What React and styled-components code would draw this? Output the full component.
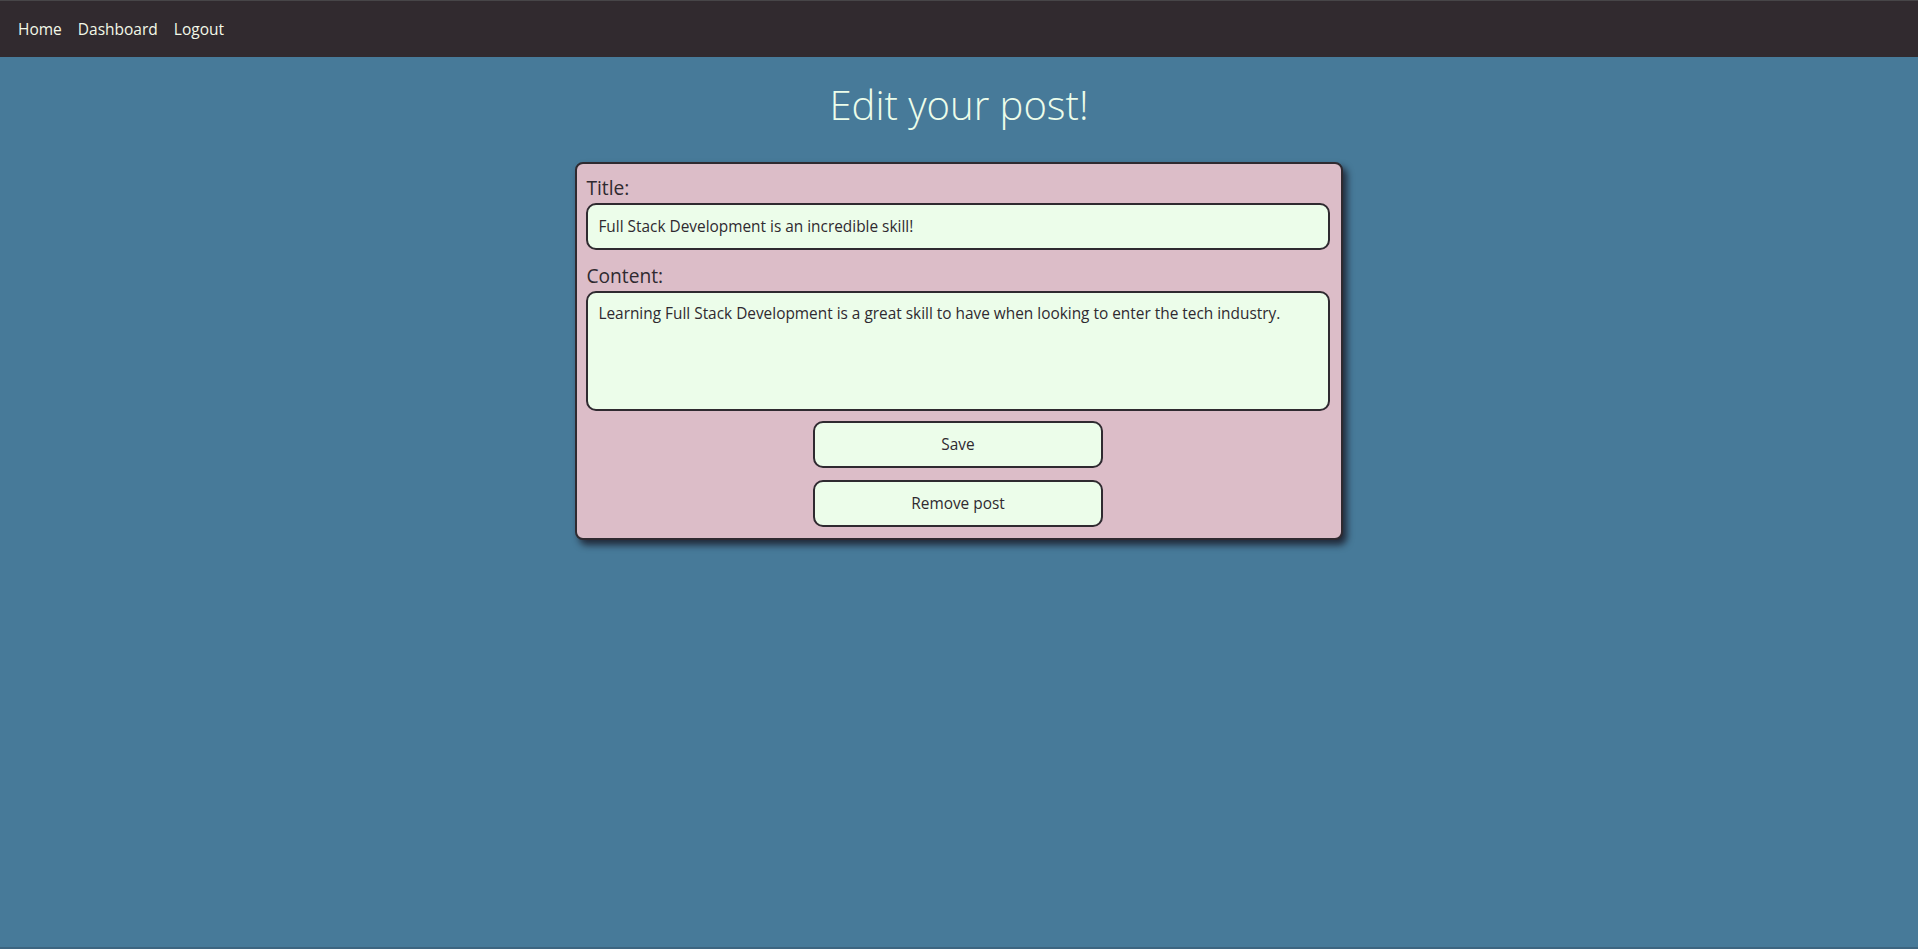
import React, { useState } from 'react';
import styled, { createGlobalStyle } from 'styled-components';

const GlobalStyle = createGlobalStyle`
    * {
        box-sizing: border-box;
    }
    html, body {
        margin: 0;
        padding: 0;
    }
    body {
        font-family: "Open Sans", "Liberation Sans", sans-serif;
        background: #477a99;
        color: #2f2a30;
    }
`;

const Page = styled.div`
    min-height: 100vh;
    display: flex;
    flex-direction: column;
    border-top: 1px solid #474548;
`;

const NavBar = styled.nav`
    height: 56px;
    background: #312a2f;
    display: flex;
    align-items: center;
    padding: 0 18px;
    gap: 16px;
`;

const NavLink = styled.a`
    color: #f3f8e8;
    font-size: 15.5px;
    text-decoration: none;
    cursor: pointer;
`;

const Main = styled.main`
    flex: 1;
    display: flex;
    flex-direction: column;
    align-items: center;
`;

const Heading = styled.h1`
    margin: 20px 0 30px;
    font-size: 40px;
    font-weight: 300;
    color: #ecfdea;
`;

const Card = styled.form`
    width: 40%;
    background: #dcbdc8;
    border: 2px solid #2f2a30;
    border-radius: 8px;
    padding: 10px 11px 11px 9px;
    box-shadow: 4px 5px 7px rgba(20, 15, 25, 0.75);
    display: flex;
    flex-direction: column;
`;

const Label = styled.label`
    font-size: 19.2px;
    line-height: 27px;
    margin-bottom: 2px;
`;

const Field = styled.input`
    width: 100%;
    height: 47px;
    padding: 10px;
    margin-bottom: 12px;
    font-family: inherit;
    font-size: 15.4px;
    color: #2f2a30;
    background: #ecfdea;
    border: 2px solid #2f2a30;
    border-radius: 10px;
    outline: none;
`;

const Area = styled.textarea`
    width: 100%;
    height: 120px;
    padding: 10px;
    margin-bottom: 10px;
    font-family: inherit;
    font-size: 15.4px;
    color: #2f2a30;
    background: #ecfdea;
    border: 2px solid #2f2a30;
    border-radius: 10px;
    outline: none;
    resize: none;
`;

const ButtonCol = styled.div`
    display: flex;
    flex-direction: column;
    align-items: center;
    gap: 12px;
`;

const Button = styled.button`
    width: 290px;
    height: 47px;
    font-family: inherit;
    font-size: 15.4px;
    color: #2f2a30;
    background: #ecfdea;
    border: 2px solid #2f2a30;
    border-radius: 10px;
    cursor: pointer;
`;

const BottomEdge = styled.div`
    height: 2px;
    background: #3d6580;
`;

export default function App() {
    const [title, setTitle] = useState('Full Stack Development is an incredible skill!');
    const [content, setContent] = useState(
        'Learning Full Stack Development is a great skill to have when looking to enter the tech industry.'
    );

    return (
        <React.Fragment>
            <GlobalStyle />
            <Page>
                <NavBar>
                    <NavLink>Home</NavLink>
                    <NavLink>Dashboard</NavLink>
                    <NavLink>Logout</NavLink>
                </NavBar>
                <Main>
                    <Heading>Edit your post!</Heading>
                    <Card onSubmit={(e) => e.preventDefault()}>
                        <Label htmlFor="post-title">Title:</Label>
                        <Field
                            id="post-title"
                            value={title}
                            onChange={(e) => setTitle(e.target.value)}
                        />
                        <Label htmlFor="post-content">Content:</Label>
                        <Area
                            id="post-content"
                            value={content}
                            onChange={(e) => setContent(e.target.value)}
                        />
                        <ButtonCol>
                            <Button type="submit">Save</Button>
                            <Button type="button">Remove post</Button>
                        </ButtonCol>
                    </Card>
                </Main>
                <BottomEdge />
            </Page>
        </React.Fragment>
    );
}
